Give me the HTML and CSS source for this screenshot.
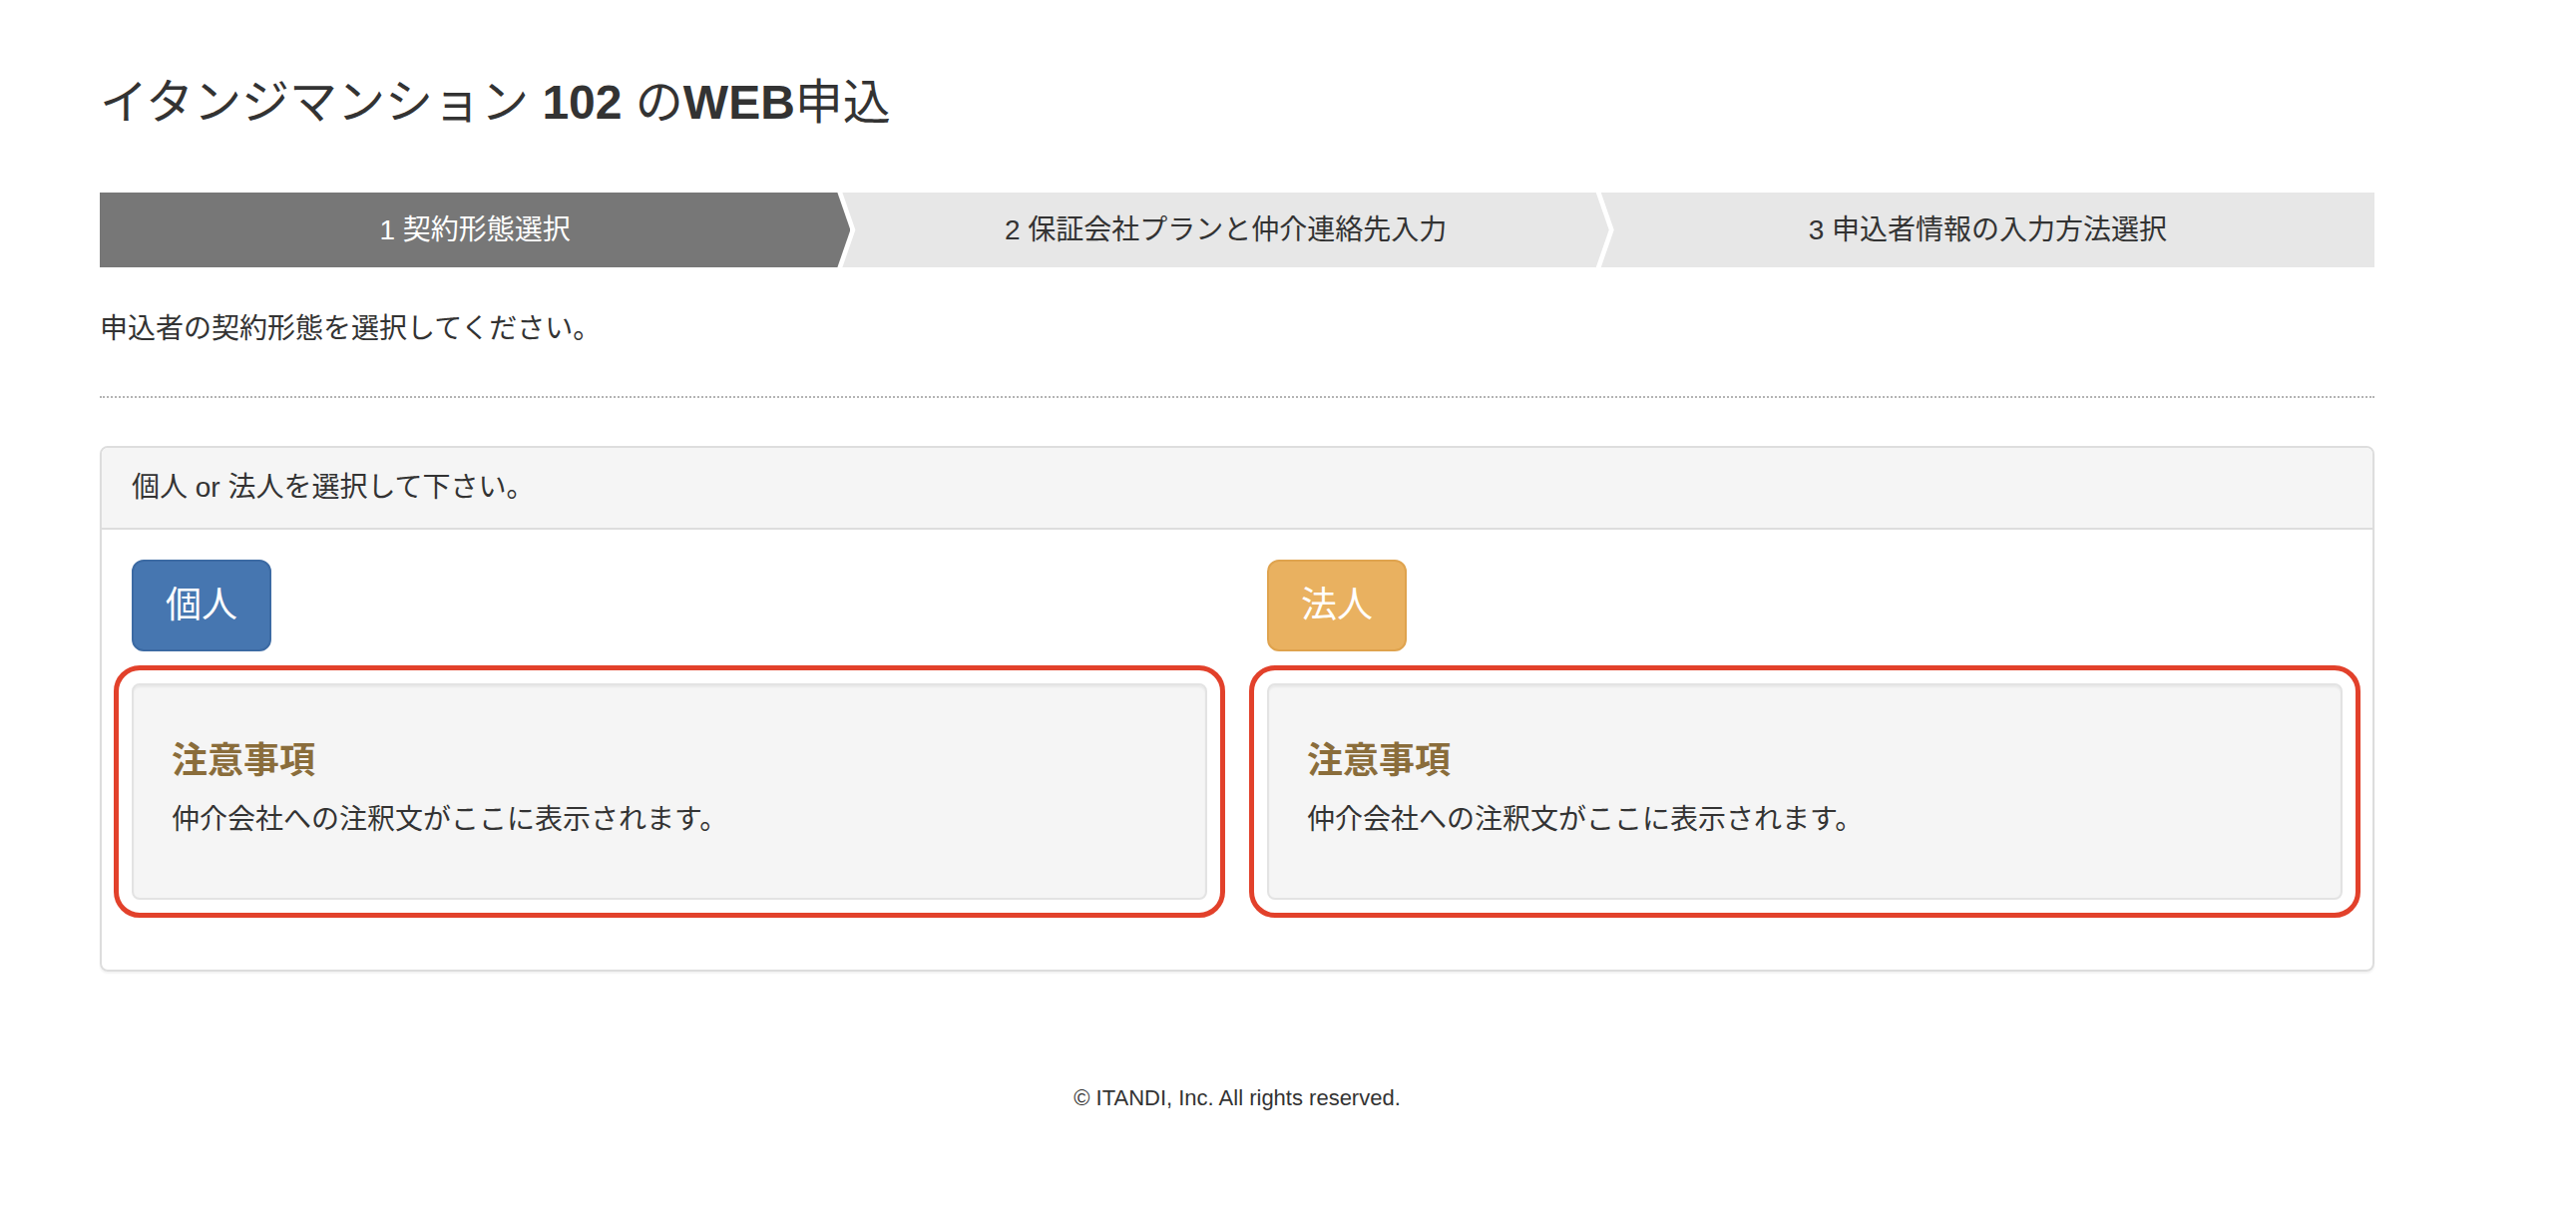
FILE: index.html
```html
<!DOCTYPE html>
<html lang="ja">
<head>
  <meta charset="UTF-8">
  <meta name="viewport" content="width=device-width, initial-scale=1.0">
  <title>イタンジマンション 102 のWEB申込</title>
  <link rel="stylesheet" href="styles.css">
</head>
<body>
  <div class="container">
    <h1 class="page-title">イタンジマンション <span class="latin">102</span> の<span class="latin">WEB</span>申込</h1>

    <!-- Progress steps -->
    <ol class="steps">
      <li class="step active">1 契約形態選択</li>
      <li class="step">2 保証会社プランと仲介連絡先入力</li>
      <li class="step">3 申込者情報の入力方法選択</li>
    </ol>

    <p class="lead-text">申込者の契約形態を選択してください。</p>
    <hr class="divider">

    <!-- Contract type selection -->
    <div class="panel">
      <div class="panel-heading">個人 or 法人を選択して下さい。</div>
      <div class="panel-body">
        <div class="row">
          <div class="col">
            <button type="button" class="btn btn-primary">個人</button>
            <div class="well">
              <h4>注意事項</h4>
              <p>仲介会社への注釈文がここに表示されます。</p>
            </div>
          </div>
          <div class="col">
            <button type="button" class="btn btn-warning">法人</button>
            <div class="well">
              <h4>注意事項</h4>
              <p>仲介会社への注釈文がここに表示されます。</p>
            </div>
          </div>
        </div>
      </div>
    </div>

    <footer>
      <p>&copy; ITANDI, Inc. All rights reserved.</p>
    </footer>
  </div>
</body>
</html>
```

FILE: styles.css
```css
:root {
  --text-color: #333333;
  --border-color: #dddddd;
  --step-active: #777777;
  --step-idle: #e7e7e7;
  --note-color: #8a6d3b;
  --highlight: #e2412b;
}

* {
  box-sizing: border-box;
}

body {
  margin: 0;
  font-family: "Liberation Sans", "Noto Sans CJK JP", sans-serif;
  font-size: 28px;
  line-height: 40px;
  color: var(--text-color);
  background-color: #ffffff;
}

.container {
  width: 2280px;
  margin-left: 100px;
}

/* Title */
.page-title {
  margin: 76px 0 0;
  font-size: 48px;
  line-height: 53px;
  font-weight: 400;
}

.page-title .latin {
  font-weight: 700;
}

/* Steps */
.steps {
  display: flex;
  list-style: none;
  margin: 64px 0 0;
  padding: 0;
  height: 75px;
}

.step {
  flex: 1;
  display: flex;
  align-items: center;
  justify-content: center;
  margin-left: -8px;
  background-color: var(--step-idle);
  color: var(--text-color);
  clip-path: polygon(0 0, calc(100% - 13px) 0, 100% 50%, calc(100% - 13px) 100%, 0 100%, 13px 50%);
}

.step:first-child {
  flex: 0 0 33%;
  margin-left: 0;
  clip-path: polygon(0 0, calc(100% - 13px) 0, 100% 50%, calc(100% - 13px) 100%, 0 100%);
}

.step:nth-child(2) {
  flex: 0 0 33.7%;
}

.step:last-child {
  clip-path: polygon(0 0, 100% 0, 100% 100%, 0 100%, 13px 50%);
}

.step.active {
  background-color: var(--step-active);
  color: #ffffff;
}

.lead-text {
  margin: 42px 0 0;
}

.divider {
  margin: 47px 0 0;
  border: 0;
  border-top: 2px dotted #b4b4b4;
}

/* Panel */
.panel {
  margin-top: 48px;
  border: 2px solid var(--border-color);
  border-radius: 8px;
  box-shadow: 0 2px 2px rgba(0, 0, 0, 0.05);
}

.panel-heading {
  padding: 20px 30px;
  background-color: #f5f5f5;
  border-bottom: 2px solid var(--border-color);
  border-radius: 6px 6px 0 0;
}

.panel-body {
  padding: 30px;
}

.row {
  display: grid;
  grid-template-columns: 1fr 1fr;
  gap: 60px;
}

/* Buttons */
.btn {
  display: block;
  margin-bottom: 32px;
  padding: 20px 32px;
  font-family: inherit;
  font-size: 36px;
  line-height: 48px;
  color: #ffffff;
  border: 2px solid transparent;
  border-radius: 12px;
  cursor: pointer;
}

.btn-primary {
  background-color: #4676b0;
  border-color: #3c6aa3;
}

.btn-warning {
  background-color: #e9b160;
  border-color: #dfa34e;
}

/* Notes */
.well {
  padding: 38px;
  margin-bottom: 40px;
  background-color: #f5f5f5;
  border: 2px solid #e3e3e3;
  border-radius: 8px;
  box-shadow: inset 0 2px 2px rgba(0, 0, 0, 0.05);
  outline: 5px solid var(--highlight);
  outline-offset: 13px;
}

.well h4 {
  margin: 18px 0 19px;
  font-size: 36px;
  line-height: 40px;
  font-weight: 700;
  color: var(--note-color);
}

.well p {
  margin: 0 0 20px;
}

/* Footer */
footer {
  margin-top: 111px;
  text-align: center;
  font-size: 22px;
  line-height: 32px;
}

footer p {
  margin: 0;
}
```
